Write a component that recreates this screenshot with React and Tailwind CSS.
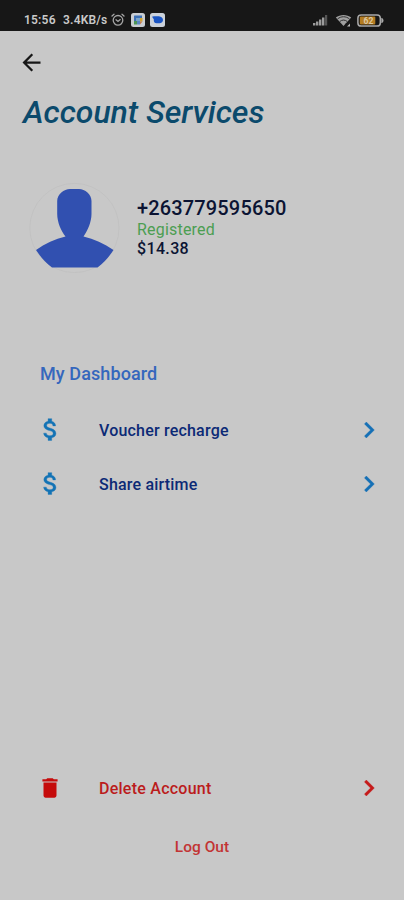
import { MdArrowBack, MdAttachMoney, MdChevronRight, MdDelete } from "react-icons/md";

const services = [
  { label: "Voucher recharge" },
  { label: "Share airtime" },
];

function StatusBar() {
  return (
    <div className="h-[31px] bg-[#171717] pl-6 pr-[20px] pt-[9px] flex items-center justify-between text-[#c9c9c9]">
      <div className="flex items-center">
        <span className="text-[12px] font-semibold tracking-[0.2px] whitespace-nowrap w-[39px]">15:56</span>
        <span className="text-[12px] font-semibold tracking-[0.2px] whitespace-nowrap w-[48px]">3.4KB/s</span>
        <svg className="w-[14px] h-[14px]" viewBox="0 0 14 14" fill="none" stroke="#a5a5a5" strokeWidth="1.3" strokeLinecap="round">
          <circle cx="7" cy="7.3" r="4.8" />
          <path d="M1 3 L3 1.2 M13 3 L11 1.2 M5 6.8 L7 8.4 L9.2 6.6" />
        </svg>
        <svg className="w-[14px] h-[14px] ml-[6px]" viewBox="0 0 14 14">
          <rect width="14" height="14" rx="2.5" fill="#c9cdd2" />
          <path d="M3.5 2.5H11V5H5.5V8H3V3Z" fill="#3c70b5" />
          <path d="M5.5 5H9V8H5.5Z" fill="#79a5cb" />
          <path d="M9 5H11.5V8.5H9Z" fill="#d1a431" />
          <path d="M3 8H6V11.5H3Z" fill="#4d9657" />
          <path d="M6 8H9V11.5H6Z" fill="#5b86c2" />
          <path d="M9 8.5H11.5L9 11.5Z" fill="#c47b4f" />
        </svg>
        <svg className="w-[15px] h-[14px] ml-[5px]" viewBox="0 0 15 14">
          <rect width="15" height="14" rx="2.5" fill="#cbd1da" />
          <path d="M2 3.8C4 3.2 9 3.2 10.5 3.8C12 4.4 13 5.5 13 7S11.5 10.2 9.5 10.2H6.5C4.8 10.2 3.8 9 3.8 7.5V6.2Z" fill="#1954c4" />
        </svg>
      </div>
      <div className="flex items-center">
        <svg className="w-[15px] h-[12px]" viewBox="0 0 15 12" fill="#9b9b9b">
          <rect x="0" y="9" width="2.4" height="2.5" />
          <rect x="3" y="7.5" width="2.4" height="4" />
          <rect x="6" y="5.5" width="2.4" height="6" />
          <rect x="9" y="3.5" width="2.4" height="8" />
          <rect x="12" y="1" width="2.2" height="10.5" fill="#555555" />
        </svg>
        <svg className="w-[17px] h-[13px] ml-[7px]" viewBox="0 0 17 13">
          <path d="M8.5 12 L0.8 3.6 C5 0 12 0 16.2 3.6Z" fill="#a0a0a0" />
          <path d="M2.5 5 C6 2 11 2 14.5 5 M4.8 7.5 C7 5.6 10 5.6 12.2 7.5" fill="none" stroke="#303030" strokeWidth="1" />
          <path d="M10.5 9.5H15.5V13H10.5Z" fill="#171717" />
          <path d="M12 12.4L15 9.5V12.4Z" fill="#b8b8b8" />
        </svg>
        <svg className="w-[27px] h-[13px] ml-[5px]" viewBox="0 0 27 13">
          <rect x="0.9" y="0.9" width="22.4" height="11.2" rx="3.2" fill="none" stroke="#a9a9a9" strokeWidth="1.5" />
          <path d="M24.3 3.7C27.2 4.5 27.2 8.5 24.3 9.3Z" fill="#a9a9a9" />
          <rect x="2.8" y="2.6" width="15.5" height="7.8" rx="1" fill="#b47c20" />
          <text x="11.5" y="9.5" textAnchor="middle" fontSize="8.5" fontWeight="700" fill="#ddc9a4">62</text>
        </svg>
      </div>
    </div>
  );
}

function Avatar() {
  return (
    <svg className="w-[92px] h-[92px] shrink-0" viewBox="0 0 92 92">
      <circle cx="46.4" cy="47" r="44.6" fill="none" stroke="#bdbdbd" strokeWidth="0.6" />
      <path
        d="M42 8H51C57 8 63.5 13 63.5 20V33C63.5 41 59.5 50 55.5 55.5C66 58 76 62.5 85.5 69C81 76 76 81.5 69.5 86.5H24C17.5 81.5 12.5 76 8 69C17 62.5 27 58 37.5 55.5C33 50 29.2 41 29.2 33V20C29.2 13 36 8 42 8Z"
        fill="#3150b0"
      />
    </svg>
  );
}

function MenuRow({ icon, label, textClass, chevronClass }) {
  return (
    <button className="w-full h-[54px] pl-[35px] pr-[19px] flex items-center text-left">
      <span className="w-[64px] shrink-0">{icon}</span>
      <span className={`flex-1 text-[16px] font-medium pt-px ${textClass}`}>{label}</span>
      <MdChevronRight className={`w-8 h-8 [&>path:last-child]:stroke-current [&>path:last-child]:stroke-[0.3] ${chevronClass}`} />
    </button>
  );
}

export default function App() {
  return (
    <div className="w-[404px] h-[900px] bg-[#c8c8c8] flex flex-col overflow-hidden font-[Roboto,sans-serif]">
      <StatusBar />

      <header className="pt-[18px]">
        <button className="block ml-[18px]">
          <MdArrowBack className="w-[27px] h-[27px] text-[#171717]" />
        </button>
        <h1 className="mt-[17px] ml-[23px] text-[32px] leading-[38px] italic font-medium tracking-[-0.05px] text-[#0b4a6c] whitespace-nowrap">
          Account Services
        </h1>
      </header>

      <section className="mt-[50px] ml-[28px] flex items-center">
        <Avatar />
        <div className="ml-[17px]">
          <p className="text-[20px] leading-[23px] font-medium tracking-[0.15px] text-[#0b1433]">+263779595650</p>
          <p className="text-[16px] leading-[19px] tracking-[0.2px] text-[#4c9e52]">Registered</p>
          <p className="text-[16px] leading-[19px] font-medium tracking-[0.35px] text-[#0b1433]">$14.38</p>
        </div>
      </section>

      <section className="mt-[89px]">
        <h2 className="ml-10 mb-[17px] text-[18px] leading-[24px] font-medium tracking-[0.1px] text-[#3567bd]">My Dashboard</h2>
        {services.map((service) => (
          <MenuRow
            key={service.label}
            icon={
              <MdAttachMoney className="w-[29px] h-[29px] mb-px ml-[0.5px] [&>path:last-child]:stroke-current [&>path:last-child]:stroke-[0.3] text-[#1373b5]" />
            }
            label={service.label}
            textClass="text-[#0c2a76] tracking-[0.2px]"
            chevronClass="text-[#1570b6]"
          />
        ))}
      </section>

      <footer className="mt-auto pb-[41px]">
        <MenuRow
          icon={<MdDelete className="w-[26px] h-[26px] mb-px ml-[2px] text-[#c50b0b]" />}
          label="Delete Account"
          textClass="text-[#bb1c1c] tracking-[0.25px]"
          chevronClass="text-[#c51a1a]"
        />
        <button className="block mx-auto mt-[20px] text-[15.5px] leading-[24px] font-medium text-[#c23434]">Log Out</button>
      </footer>
    </div>
  );
}
